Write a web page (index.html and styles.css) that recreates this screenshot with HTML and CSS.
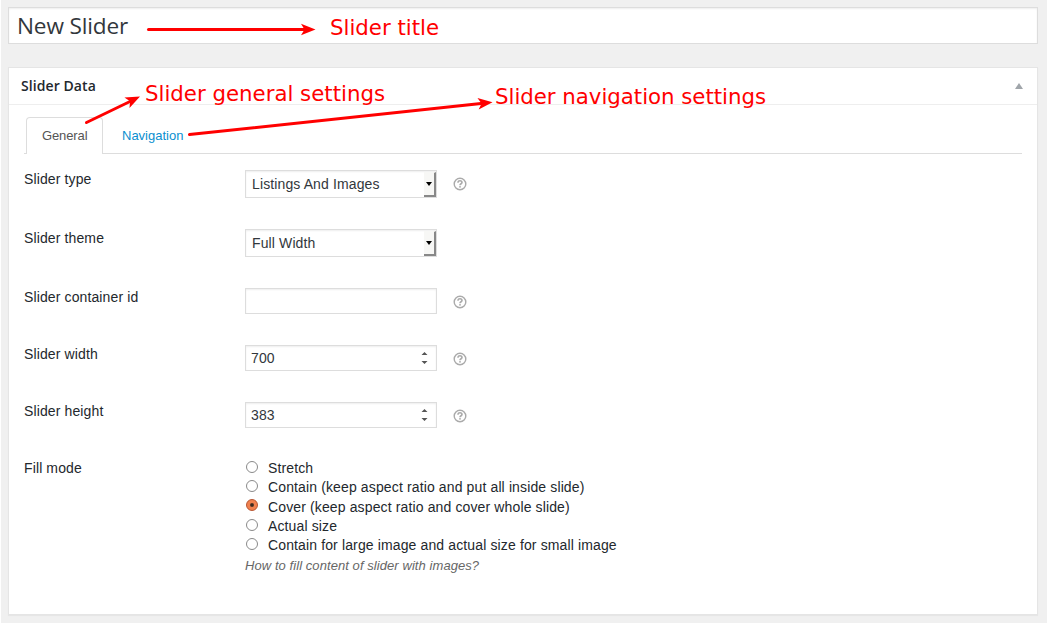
FILE: index.html
```html
<!DOCTYPE html>
<html lang="en">
<head>
<meta charset="utf-8">
<title>New Slider</title>
<link rel="stylesheet" href="styles.css">
</head>
<body>
<svg class="defs" aria-hidden="true">
  <symbol id="help" viewBox="0 0 14 14">
    <circle cx="7" cy="7" r="5.8" fill="none" stroke="#aaa" stroke-width="1.4"/>
    <path d="M5 5.7C5 4.3 5.8 3.8 7 3.8S9 4.4 9 5.500C9 6.800 7 6.700 7 8.300" fill="none" stroke="#aaa" stroke-width="1.6"/>
    <rect x="6.2" y="9.1" width="1.6" height="1.5" fill="#aaa"/>
  </symbol>
</svg>
<main class="page">
  <div class="title-box">New Slider</div>
  <section class="panel">
    <header class="panel-head">
      <h2>Slider Data</h2>
      <svg class="toggle" width="8" height="6" viewBox="0 0 8 6"><path d="M4 0L8 6H0Z" fill="#a0a5aa"/></svg>
    </header>
    <nav class="tabs">
      <a class="tab active">General</a>
      <a class="tab">Navigation</a>
    </nav>
    <div class="fields">
      <div class="field tall">
        <span class="label">Slider type</span>
        <div class="select"><span>Listings And Images</span><i class="arrow"></i></div>
        <svg class="help"><use href="#help"/></svg>
      </div>
      <div class="field tall">
        <span class="label">Slider theme</span>
        <div class="select"><span>Full Width</span><i class="arrow"></i></div>
      </div>
      <div class="field">
        <span class="label">Slider container id</span>
        <div class="input"></div>
        <svg class="help"><use href="#help"/></svg>
      </div>
      <div class="field">
        <span class="label">Slider width</span>
        <div class="input"><span>700</span><svg class="spin" viewBox="0 0 7 12"><path d="M3.5 0L6.500 3H.5ZM3.500 12L6.500 9H.5Z" fill="#555"/></svg></div>
        <svg class="help"><use href="#help"/></svg>
      </div>
      <div class="field">
        <span class="label">Slider height</span>
        <div class="input"><span>383</span><svg class="spin" viewBox="0 0 7 12"><path d="M3.5 0L6.500 3H.5ZM3.500 12L6.500 9H.5Z" fill="#555"/></svg></div>
        <svg class="help"><use href="#help"/></svg>
      </div>
      <div class="field">
        <span class="label">Fill mode</span>
        <div class="options">
          <div class="option"><i class="radio"></i>Stretch</div>
          <div class="option"><i class="radio"></i>Contain (keep aspect ratio and put all inside slide)</div>
          <div class="option"><i class="radio checked"></i>Cover (keep aspect ratio and cover whole slide)</div>
          <div class="option"><i class="radio"></i>Actual size</div>
          <div class="option"><i class="radio"></i>Contain for large image and actual size for small image</div>
          <p class="hint">How to fill content of slider with images?</p>
        </div>
      </div>
    </div>
  </section>
</main>
<svg class="notes" width="1047" height="623" viewBox="0 0 1047 623">
  <defs>
    <path id="head" d="M0 0L-14.5 5.8L-11 0L-14.5 -5.8Z"/>
  </defs>
  <g class="shaft">
    <path d="M148.500 29.500H304"/>
    <path d="M86.500 122.500L130 101.500"/>
    <path d="M189.500 134.500L481 103.500"/>
  </g>
  <g fill="#f00">
    <use href="#head" transform="translate(315.500 29.500)"/>
    <use href="#head" transform="translate(140 96.500) rotate(-25.800)"/>
    <use href="#head" transform="translate(492.500 102.300) rotate(-6.100)"/>
  </g>
  <g class="note">
    <text x="330" y="35" textLength="109">Slider title</text>
    <text x="145" y="101" textLength="240">Slider general settings</text>
    <text x="495" y="104" textLength="271">Slider navigation settings</text>
  </g>
</svg>
</body>
</html>
```
FILE: styles.css
```css
* { box-sizing: border-box; }
body {
  margin: 0;
  height: 623px;
  overflow: hidden;
  background: #f0f0f0;
  border-left: 1px solid #fff;
  font: 14px/18px "Liberation Sans", Arial, sans-serif;
  color: #23282d;
}
.defs { display: none; }
.page { padding: 7px 9px 0 7px; }
.title-box {
  height: 37px;
  padding: 0 8px;
  border: 1px solid #ddd;
  background: #fff;
  box-shadow: inset 0 1px 2px rgba(0, 0, 0, .07);
  font: 22.600px/36px "Open Sans", sans-serif;
  letter-spacing: -.15px;
  color: #32373c;
}
.panel {
  height: 548px;
  margin-top: 23px;
  border: 1px solid #e5e5e5;
  background: #fff;
  box-shadow: 0 1px 1px rgba(0, 0, 0, .04);
}
.panel-head {
  display: flex;
  align-items: center;
  justify-content: space-between;
  height: 37px;
  padding: 0 14px 0 12px;
  border-bottom: 1px solid #eee;
}
.panel-head h2 {
  margin: 0;
  font: 600 14px/20px "Open Sans", sans-serif;
  letter-spacing: .08px;
}
.tabs {
  display: flex;
  height: 49px;
  margin: 0 15px;
  padding: 12px 0 0 2px;
  border-bottom: 1px solid #ddd;
}
.tab {
  height: 36px;
  padding: 0 19px;
  font-size: 13px;
  line-height: 37px;
  color: #0a8fd0;
}
.tab.active {
  width: 77px;
  height: 37px;
  padding: 0 15px;
  border: 1px solid #ddd;
  border-bottom: 0;
  border-radius: 4px 4px 0 0;
  background: #fff;
  line-height: 35px;
  letter-spacing: -.12px;
  color: #555;
}
.fields { padding: 16px 15px 0; }
.field {
  display: grid;
  grid-template-columns: 221px 192px 14px;
  height: 57px;
  letter-spacing: .12px;
}
.tall { height: 59px; }
.label { white-space: nowrap; }
.select, .input {
  display: flex;
  justify-content: space-between;
  height: 28px;
  border: 1px solid #ddd;
  background: #fff;
  box-shadow: inset 0 1px 2px rgba(0, 0, 0, .07);
  line-height: 26px;
  color: #32373c;
}
.select { padding: 0 0 0 6px; }
.input {
  height: 26px;
  padding: 0 8px 0 5px;
  line-height: 24px;
}
.arrow {
  display: flex;
  align-items: center;
  justify-content: center;
  width: 12px;
  height: 25px;
  margin-top: 1px;
  background: #f7f7f5;
  border-right: 2px solid #888;
  border-bottom: 2px solid #888;
  border-top: 1px solid #f7f7f5;
}
.arrow::before {
  content: "";
  border: 3.500px solid transparent;
  border-top: 4px solid #000;
  border-bottom: 0;
}
.spin {
  width: 7px;
  height: 12px;
  margin-top: 6px;
}
.help {
  width: 14px;
  height: 14px;
  margin: 7px 0 0 16px;
}
.option {
  display: flex;
  height: 19.300px;
  letter-spacing: .13px;
  white-space: nowrap;
}
.radio {
  flex: none;
  width: 12px;
  height: 12px;
  margin: 2px 10px 0 1px;
  border: 1px solid #8a8a8a;
  border-radius: 50%;
  background: #fff;
}
.radio.checked {
  margin-top: 1px;
  border-color: #b8532e;
  background: radial-gradient(circle, #3c2a20 0 1.300px, #f0814f 2.500px);
}
.hint {
  margin: 2px 0 0;
  font-size: 13px;
  font-style: italic;
  line-height: 17px;
  letter-spacing: .07px;
  white-space: nowrap;
  color: #666;
}
.notes {
  position: absolute;
  left: 0;
  top: 0;
}
.shaft {
  fill: none;
  stroke: #f00;
  stroke-width: 3;
  stroke-linecap: round;
}
.note {
  font: 21.300px "DejaVu Sans", sans-serif;
  fill: #f00;
}
```
